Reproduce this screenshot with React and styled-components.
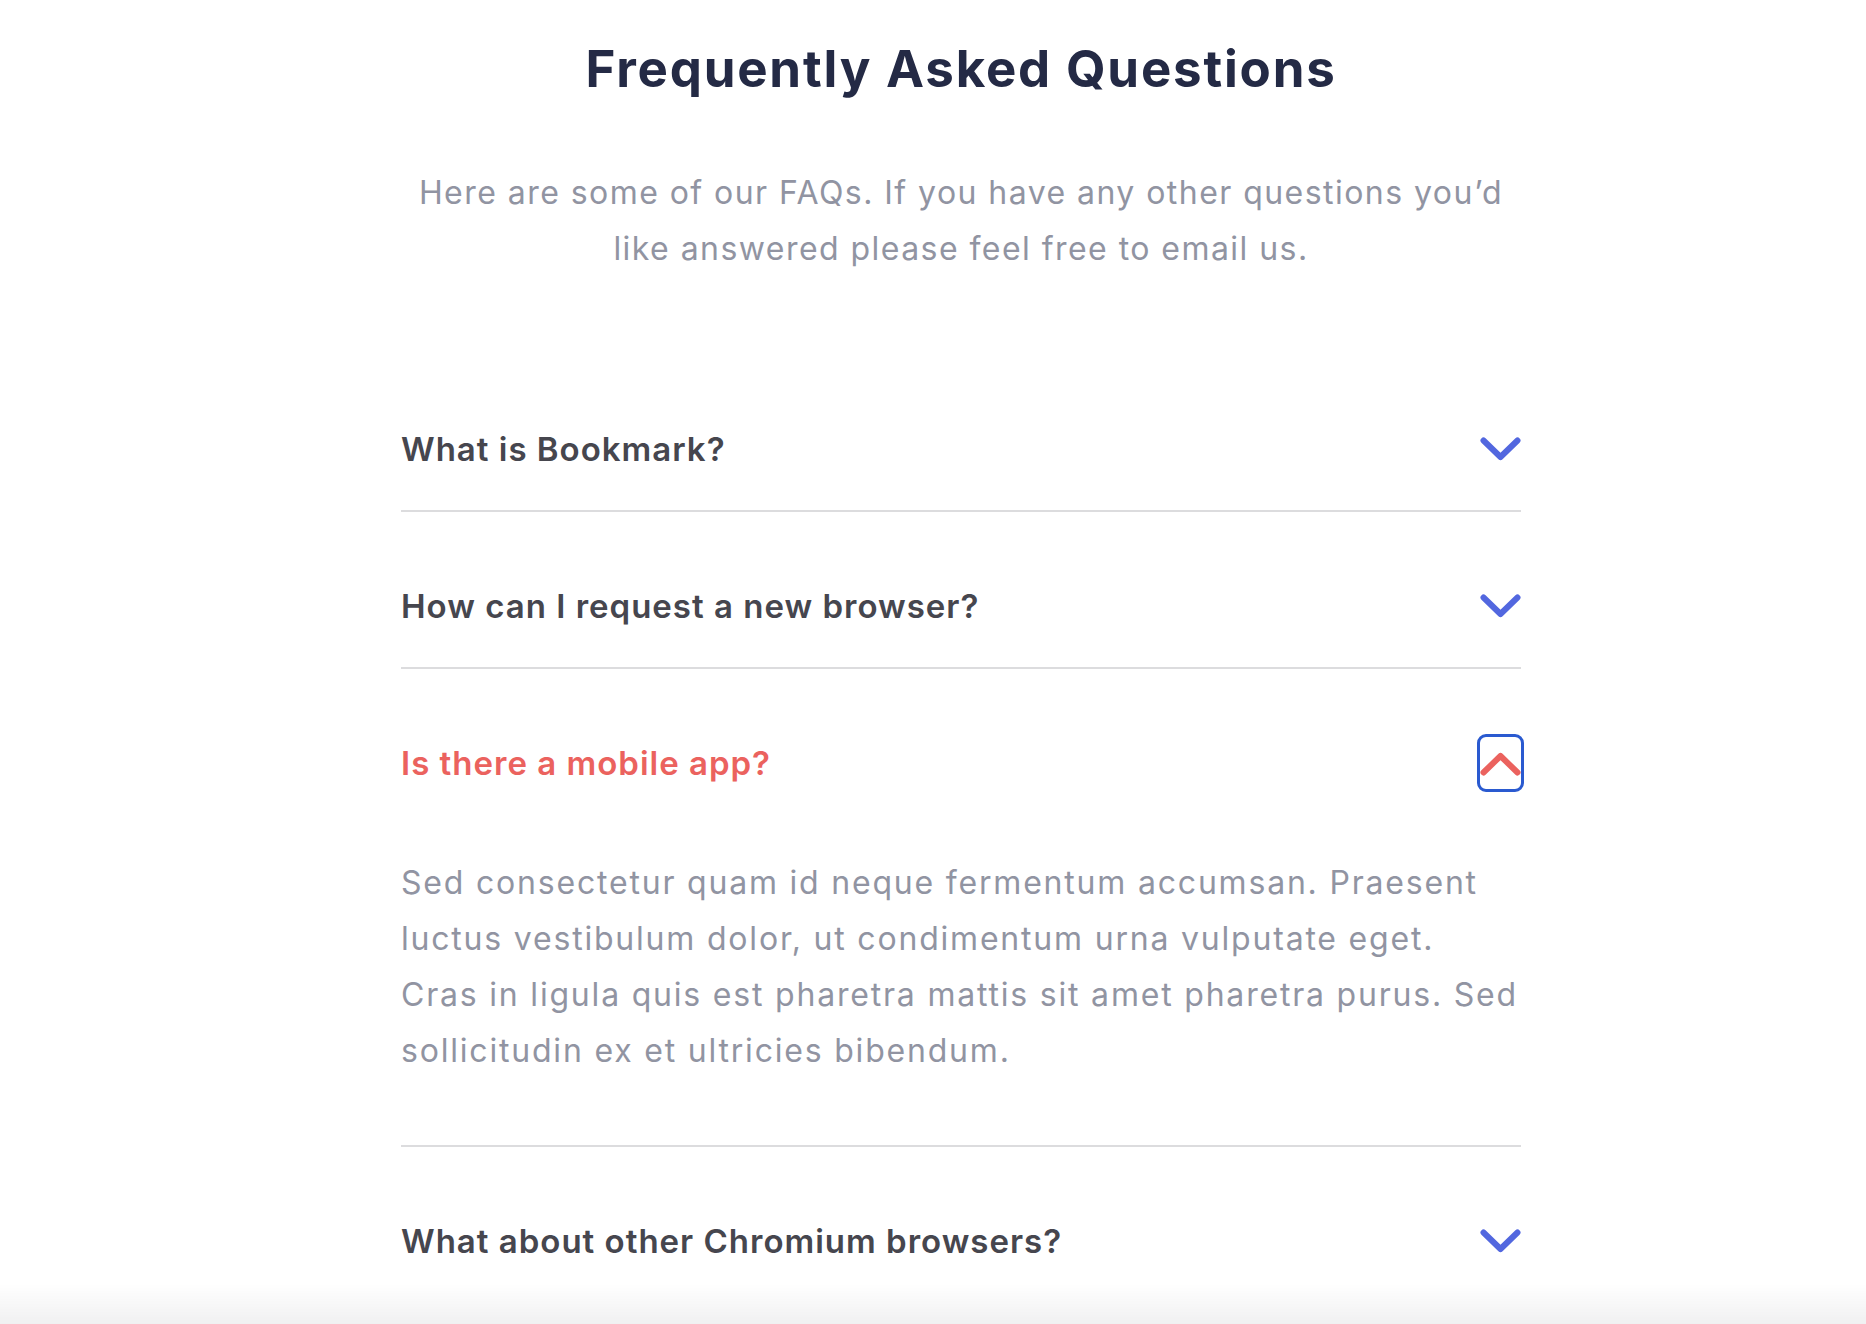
import React, { useState } from "react";
import styled, { createGlobalStyle } from "styled-components";

const GlobalStyle = createGlobalStyle`
  html, body {
    margin: 0;
    padding: 0;
    background: #ffffff;
    font-family: Inter, "Open Sans", Roboto, sans-serif;
    -webkit-font-smoothing: antialiased;
  }
  * { box-sizing: border-box; }
`;

// answers are kept as the lines they break into on the page
const faqs = [
  {
    id: 1,
    question: "What is Bookmark?",
    answer: [
      "Vivamus luctus eros aliquet convallis ultricies. Mauris augue massa,",
      "ultricies non ligula. Suspendisse imperdiet.",
    ],
  },
  {
    id: 2,
    question: "How can I request a new browser?",
    answer: [
      "Vivamus luctus eros aliquet convallis ultricies. Mauris augue massa,",
      "ultricies non ligula. Suspendisse imperdiet.",
    ],
  },
  {
    id: 3,
    question: "Is there a mobile app?",
    answer: [
      "Sed consectetur quam id neque fermentum accumsan. Praesent",
      "luctus vestibulum dolor, ut condimentum urna vulputate eget.",
      "Cras in ligula quis est pharetra mattis sit amet pharetra purus. Sed",
      "sollicitudin ex et ultricies bibendum.",
    ],
  },
  {
    id: 4,
    question: "What about other Chromium browsers?",
    answer: [
      "Integer condimentum ipsum id imperdiet finibus. Vivamus in placerat",
      "mi, at euismod dui.",
    ],
  },
];

function Chevron({ open }) {
  return (
    <svg width="41" height="25" viewBox="0 0 41 25" fill="none">
      <path
        d={open ? "M3.5 21.5 L20.5 5 L37.5 21.5" : "M3.5 3.5 L20.5 20 L37.5 3.5"}
        stroke={open ? "#EB625E" : "#5267DF"}
        strokeWidth="6"
        strokeLinecap="round"
        strokeLinejoin="round"
      />
    </svg>
  );
}

export default function App() {
  const [openId, setOpenId] = useState(3);

  return (
    <>
      <GlobalStyle />
      <Page>
        <Column>
          <Header>
            <h1>Frequently Asked Questions</h1>
            <p>
              Here are some of our FAQs. If you have any other questions you’d
              like answered please feel free to email us.
            </p>
          </Header>
          <List>
            {faqs.map(({ id, question, answer }) => {
              const open = openId === id;
              return (
                <Item key={id} open={open}>
                  <QuestionRow>
                    <Question open={open}>{question}</Question>
                    <Toggle
                      open={open}
                      onClick={() => setOpenId(open ? null : id)}
                      aria-expanded={open}
                    >
                      <Chevron open={open} />
                    </Toggle>
                  </QuestionRow>
                  {open && (
                    <Answer>
                      {answer.map((line, i) => (
                        <span key={i}>{line}</span>
                      ))}
                    </Answer>
                  )}
                </Item>
              );
            })}
          </List>
        </Column>
      </Page>
      <BottomFade />
    </>
  );
}

const Page = styled.div`
  padding: 38px 0 0 56px;
`;

const Column = styled.div`
  width: 1120px;
  margin: 0 auto;
`;

const Header = styled.header`
  display: flex;
  flex-direction: column;
  align-items: center;
  text-align: center;
  h1 {
    margin: 0;
    font-size: 51px;
    line-height: 62px;
    font-weight: 700;
    letter-spacing: 1.8px;
    color: #242a45;
  }
  p {
    margin: 65px 0 0;
    max-width: 1100px;
    font-size: 32px;
    line-height: 56px;
    letter-spacing: 1.45px;
    color: #9194a2;
  }
`;

const List = styled.div`
  margin-top: 78px;
  display: flex;
  flex-direction: column;
`;

const Item = styled.div`
  border-bottom: 2px solid #dcdcde;
  padding-bottom: ${({ open }) => (open ? "66px" : "41px")};
  padding-top: 74px;
  &:last-child {
    border-bottom: none;
  }
`;

const QuestionRow = styled.div`
  display: flex;
  align-items: center;
  justify-content: space-between;
  height: 40px;
`;

const Question = styled.h2`
  margin: 0;
  font-size: 33px;
  line-height: 40px;
  font-weight: 600;
  letter-spacing: 1px;
  color: ${({ open }) => (open ? "#EB625E" : "#46464e")};
`;

const Toggle = styled.button`
  display: flex;
  align-items: center;
  justify-content: center;
  width: 41px;
  height: 52px;
  padding: 0;
  border: none;
  background: none;
  cursor: pointer;
  border-radius: 6px;
  outline: ${({ open }) => (open ? "3px solid #2a5ad0" : "none")};
  svg {
    flex-shrink: 0;
  }
`;

const Answer = styled.p`
  margin: 72px 0 0;
  display: flex;
  flex-direction: column;
  font-size: 32px;
  line-height: 56px;
  letter-spacing: 1.8px;
  white-space: nowrap;
  color: #9194a2;
`;

const BottomFade = styled.div`
  position: fixed;
  left: 0;
  right: 0;
  bottom: 0;
  height: 40px;
  pointer-events: none;
  background: linear-gradient(rgba(240, 240, 241, 0), rgba(240, 240, 241, 1));
`;
